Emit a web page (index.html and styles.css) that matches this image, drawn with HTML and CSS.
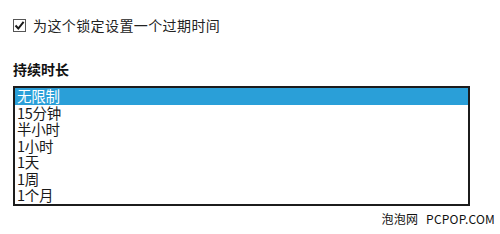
FILE: index.html
```html
<!DOCTYPE html>
<html>
<head>
<meta charset="utf-8">
<link rel="stylesheet" href="styles.css">
</head>
<body>
<div class="page">
  <label class="check-row">
    <span class="checkbox">
      <svg width="11" height="11" viewBox="0 0 11 11"><path d="M1.5 5.5 L4.3 8.5 L9.6 1.8" fill="none" stroke="#1a1a1a" stroke-width="2"/></svg>
    </span>
    <span class="check-label">为这个锁定设置一个过期时间</span>
  </label>
  <div class="section-title">持续时长</div>
  <div class="listbox">
    <div class="item selected">无限制</div>
    <div class="item">15分钟</div>
    <div class="item">半小时</div>
    <div class="item">1小时</div>
    <div class="item">1天</div>
    <div class="item">1周</div>
    <div class="item">1个月</div>
  </div>
  <div class="watermark">泡泡网 PCPOP.COM</div>
</div>
</body>
</html>
```
FILE: styles.css
```css
html, body {
  margin: 0;
  padding: 0;
  background: #fff;
}
body {
  width: 500px;
  height: 234px;
  overflow: hidden;
  font-family: "Noto Sans CJK SC", "Liberation Sans", sans-serif;
  color: #1a1a1a;
}
.page {
  padding: 19px 0 0 13px;
  display: flex;
  flex-direction: column;
}
.check-row {
  display: flex;
  align-items: center;
  height: 13px;
}
.checkbox {
  width: 11px;
  height: 11px;
  border: 1px solid #555;
  display: flex;
  align-items: center;
  justify-content: center;
  background: #fff;
}
.check-label {
  margin-left: 7px;
  font-size: 14px;
  line-height: 13px;
  letter-spacing: 0.4px;
  color: #222;
}
.section-title {
  margin-top: 30px;
  font-size: 14px;
  font-weight: bold;
  line-height: 14px;
  height: 14px;
  color: #111;
}
.listbox {
  margin-top: 10px;
  width: 453px;
  height: 116px;
  border: 2px solid #1c1c1c;
  display: flex;
  flex-direction: column;
  overflow: hidden;
}
.item {
  height: 16.5px;
  line-height: 16.5px;
  font-size: 14.5px;
  padding-left: 2px;
  color: #1a1a1a;
  letter-spacing: -0.3px;
  white-space: nowrap;
}
.item.selected {
  background: #2a9fd8;
  color: #fff;
}
.watermark {
  align-self: flex-end;
  margin-top: 7px;
  margin-right: 5px;
  font-size: 12px;
  line-height: 12px;
  word-spacing: 5px;
  letter-spacing: 0.2px;
  color: #111;
}
```
